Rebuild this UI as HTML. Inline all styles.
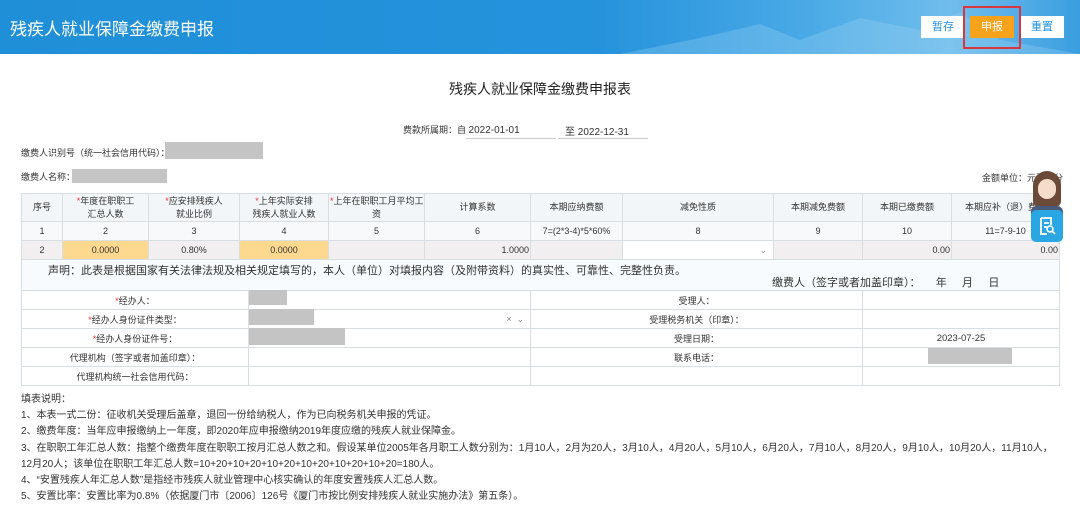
<!DOCTYPE html>
<html><head><meta charset="utf-8">
<style>
*{margin:0;padding:0;box-sizing:border-box}
body{width:1080px;height:514px;overflow:hidden;background:#fff;font-family:"Liberation Sans","Noto Sans CJK SC",sans-serif;color:#333;position:relative}
.a{position:absolute;white-space:nowrap}
.hdr{position:absolute;left:0;top:0;width:1080px;height:54px;background:linear-gradient(90deg,#1f8fd8 0%,#2592dc 55%,#4aaae6 75%,#70bdec 88%,#3a9ee0 100%)}
.btn{position:absolute;top:16px;height:22px;width:44px;font-size:11px;text-align:center;line-height:22px}
table{position:absolute;border-collapse:collapse;table-layout:fixed;font-size:9px}
td{border:1px solid #d9dee3;text-align:center;padding:0 1px;overflow:hidden;white-space:nowrap}
.r{color:#e33}
.g{background:#c4c4c4;position:absolute}
.notes{position:absolute;left:21px;top:392px;font-size:10px;line-height:16.2px;color:#333;white-space:nowrap}
</style></head><body>
<div class="hdr">
<svg width="1080" height="54" style="position:absolute;left:0;top:0"><path d="M620 54 L700 38 L760 24 L800 40 L860 18 L920 30 L960 12 L1000 40 L1080 54Z" fill="#9fd4f2" opacity=".3"/></svg>
<div class="a" style="left:10px;top:15px;font-size:17px;color:#fff">残疾人就业保障金缴费申报</div>
<div class="btn" style="left:921px;background:#fff;color:#2592dc">暂存</div>
<div class="btn" style="left:970px;background:#f7a21b;color:#fff">申报</div>
<div class="btn" style="left:1020px;background:#fff;color:#2592dc">重置</div>
<div class="a" style="left:963px;top:6px;width:58px;height:43px;border:2px solid #d9363e"></div>
</div>
<div class="a" style="left:0;width:1080px;text-align:center;top:79px;font-size:14px;color:#222">残疾人就业保障金缴费申报表</div>
<div class="a" style="left:403px;top:123px;font-size:9px">费款所属期：自 <span style="font-size:10px">2022-01-01</span></div>
<div class="a" style="left:466px;top:138px;width:90px;border-top:1px solid #ccc"></div>
<div class="a" style="left:565px;top:123px;font-size:10px">至 2022-12-31</div>
<div class="a" style="left:558px;top:138px;width:90px;border-top:1px solid #ccc"></div>
<div class="a" style="left:21px;top:146px;font-size:9px">缴费人识别号（统一社会信用代码）：</div>
<div class="g" style="left:165px;top:142px;width:98px;height:17px"></div>
<div class="a" style="left:21px;top:170px;font-size:9px">缴费人名称：</div>
<div class="g" style="left:72px;top:169px;width:95px;height:14px"></div>
<div class="a" style="left:982px;top:171px;font-size:9px">金额单位：元至角分</div>
<table style="left:21px;top:193px;width:1038px">
<colgroup><col width="41"><col width="86"><col width="91"><col width="89"><col width="96"><col width="106"><col width="92"><col width="151"><col width="89"><col width="89"><col width="108"></colgroup>
<tr style="height:28px;background:#f3f6f9;line-height:13px"><td>序号</td><td><span class="r">*</span>年度在职职工<br>汇总人数</td><td><span class="r">*</span>应安排残疾人<br>就业比例</td><td><span class="r">*</span>上年实际安排<br>残疾人就业人数</td><td><span class="r">*</span>上年在职职工月平均工<br>资</td><td>计算系数</td><td>本期应纳费额</td><td>减免性质</td><td>本期减免费额</td><td>本期已缴费额</td><td>本期应补（退）费额</td></tr>
<tr style="height:19px;background:#f7f9fb"><td>1</td><td>2</td><td>3</td><td>4</td><td>5</td><td>6</td><td>7=(2*3-4)*5*60%</td><td>8</td><td>9</td><td>10</td><td>11=7-9-10</td></tr>
<tr style="height:19px;background:#f1efef"><td>2</td><td style="background:#fdd98f">0.0000</td><td>0.80%</td><td style="background:#fdd98f">0.0000</td><td></td><td style="text-align:right">1.0000</td><td></td><td style="background:#fff;text-align:right;color:#888;padding-right:6px">&#8964;</td><td></td><td style="text-align:right">0.00</td><td style="text-align:right">0.00</td></tr>
<tr style="height:31px;background:#f7fbfd"><td colspan="11" style="text-align:left;font-size:11px;vertical-align:top;padding:2px 0 0 26px;position:relative">声明：此表是根据国家有关法律法规及相关规定填写的，本人（单位）对填报内容（及附带资料）的真实性、可靠性、完整性负责。<span style="position:absolute;left:750px;top:14px">缴费人（签字或者加盖印章）：&nbsp;&nbsp;&nbsp;&nbsp;&nbsp;年&nbsp;&nbsp;&nbsp;&nbsp;&nbsp;月&nbsp;&nbsp;&nbsp;&nbsp;&nbsp;日</span></td></tr>
</table>
<table style="left:21px;top:290px;width:1038px">
<colgroup><col width="227"><col width="282"><col width="332"><col width="197"></colgroup>
<tr style="height:19px"><td><span class="r">*</span>经办人：</td><td></td><td>受理人：</td><td></td></tr>
<tr style="height:19px"><td><span class="r">*</span>经办人身份证件类型：</td><td style="text-align:right;color:#888;padding-right:6px">×&nbsp;&nbsp;&#8964;</td><td>受理税务机关（印章）：</td><td></td></tr>
<tr style="height:19px"><td><span class="r">*</span>经办人身份证件号：</td><td></td><td>受理日期：</td><td style="font-size:9.5px">2023-07-25</td></tr>
<tr style="height:19px"><td>代理机构（签字或者加盖印章）：</td><td></td><td>联系电话：</td><td></td></tr>
<tr style="height:19px"><td>代理机构统一社会信用代码：</td><td></td><td></td><td></td></tr>
</table>
<div class="g" style="left:249px;top:290px;width:38px;height:15px"></div>
<div class="g" style="left:249px;top:309px;width:65px;height:16px"></div>
<div class="g" style="left:249px;top:328px;width:96px;height:17px"></div>
<div class="g" style="left:928px;top:348px;width:84px;height:16px"></div>
<div class="notes">填表说明：<br>1、本表一式二份：征收机关受理后盖章，退回一份给纳税人，作为已向税务机关申报的凭证。<br>2、缴费年度：当年应申报缴纳上一年度，即2020年应申报缴纳2019年度应缴的残疾人就业保障金。<br>3、在职职工年汇总人数：指整个缴费年度在职职工按月汇总人数之和。假设某单位2005年各月职工人数分别为：1月10人，2月为20人，3月10人，4月20人，5月10人，6月20人，7月10人，8月20人，9月10人，10月20人，11月10人，<br>12月20人；该单位在职职工年汇总人数=10+20+10+20+10+20+10+20+10+20+10+20=180人。<br>4、“安置残疾人年汇总人数”是指经市残疾人就业管理中心核实确认的年度安置残疾人汇总人数。<br>5、安置比率：安置比率为0.8%（依据厦门市〔2006〕126号《厦门市按比例安排残疾人就业实施办法》第五条）。</div>
<div class="a" style="left:1033px;top:171px;width:28px;height:36px;border-radius:14px 14px 6px 6px;background:#6b4a3a"></div>
<div class="a" style="left:1038px;top:179px;width:18px;height:20px;border-radius:9px;background:#f6dccb"></div>
<div class="a" style="left:1031px;top:206px;width:32px;height:18px;background:#4a5a7a;border-radius:6px 6px 0 0"></div>
<div class="a" style="left:1031px;top:210px;width:32px;height:32px;background:#2aa6e3;border-radius:5px"></div>
<svg class="a" style="left:1037px;top:216px" width="20" height="20" viewBox="0 0 20 20"><path d="M4 2h10v7M4 2v16h6M7 7h5M7 11h3" stroke="#fff" stroke-width="1.8" fill="none"/><circle cx="13" cy="13" r="3" stroke="#fff" stroke-width="1.6" fill="none"/><path d="M15 15l3 3" stroke="#fff" stroke-width="1.8"/></svg>
</body></html>
